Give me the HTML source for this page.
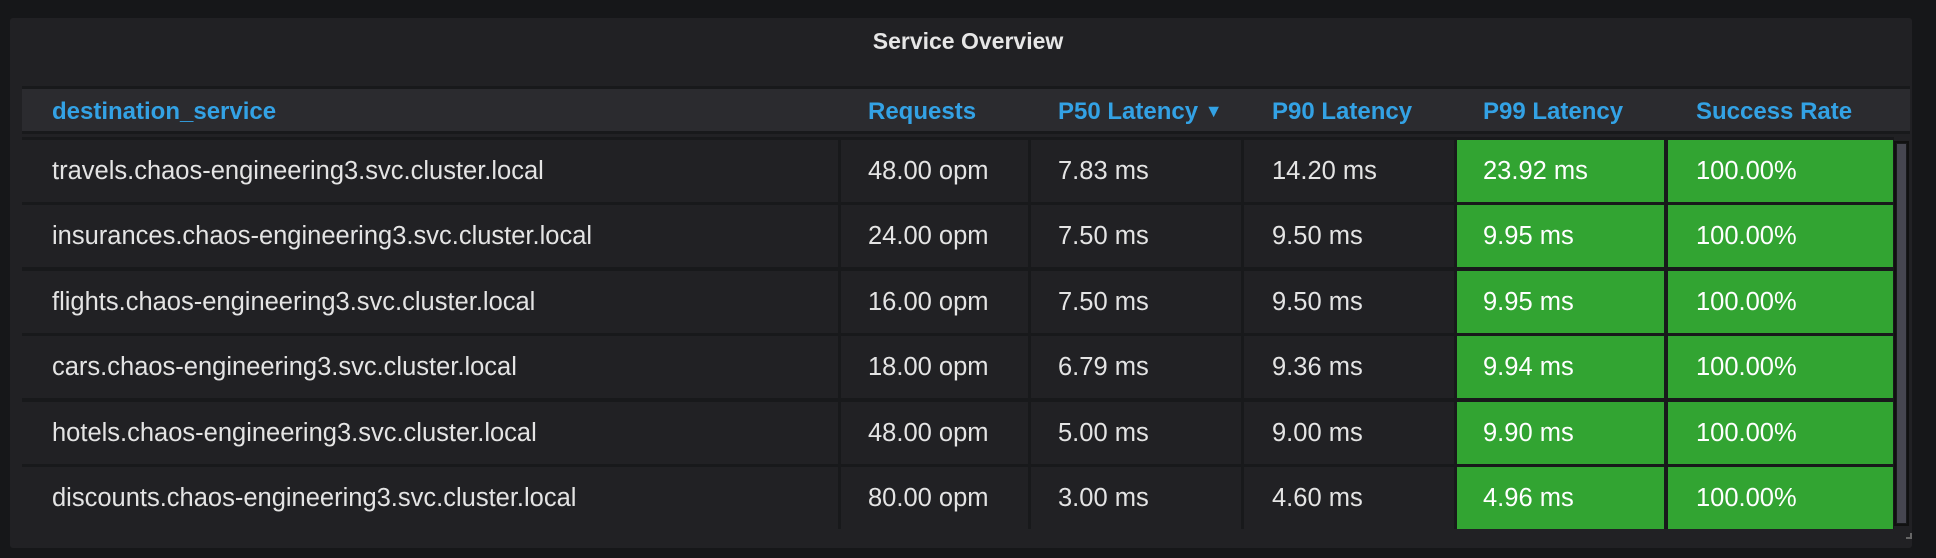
<!DOCTYPE html>
<html><head><meta charset="utf-8"><style>
*{margin:0;padding:0;box-sizing:border-box}
body{width:1936px;height:558px;background:#161719;font-family:"Liberation Sans",sans-serif;position:relative;overflow:hidden;color:#e4e4e4}
.panel{position:absolute;left:10px;top:18px;width:1902px;height:530px;background:#212124;border-radius:3px}
.title{position:absolute;left:0;right:0;top:28px;text-align:center;font-size:23px;font-weight:bold;color:#e6e6e6}
.hdr{position:absolute;left:22px;top:86px;width:1888px;height:48px;background:#2b2b2f;border-top:3px solid #18191b;border-bottom:3px solid #18191b}
.h{position:absolute;top:9px;font-size:24px;font-weight:bold;color:#33a2e5}
.bg{position:absolute;left:22px;top:137px;width:1872px;height:392px;background:#18191b}
.c{position:absolute;height:62px;background:#212124;font-size:25.5px;line-height:62px;white-space:nowrap}
.g{background:#32a432;color:#fff}
.sb{position:absolute;left:1894px;top:141px;width:15px;height:385px;background:#18191b;border:2px solid #111}
.sb div{position:absolute;left:1px;right:1px;top:1px;bottom:1px;background:#464650}
.rz{position:absolute;left:1906px;top:533px;width:6px;height:6px;border-right:2px solid #666;border-bottom:2px solid #666}
</style></head><body>
<div class="panel"></div>
<div class="title">Service Overview</div>
<div class="hdr">
<span class="h" style="left:30px">destination_service</span>
<span class="h" style="left:846px">Requests</span>
<span class="h" style="left:1036px">P50 Latency <span style="font-size:18px;vertical-align:2px">&#9660;</span></span>
<span class="h" style="left:1250px">P90 Latency</span>
<span class="h" style="left:1461px">P99 Latency</span>
<span class="h" style="left:1674px">Success Rate</span>
</div>
<div class="bg"></div>
<div id="rows"></div>
<div class="sb"><div></div></div>
<div class="rz"></div>
<script>
var d=[["travels","48.00 opm","7.83 ms","14.20 ms","23.92 ms"],["insurances","24.00 opm","7.50 ms","9.50 ms","9.95 ms"],["flights","16.00 opm","7.50 ms","9.50 ms","9.95 ms"],["cars","18.00 opm","6.79 ms","9.36 ms","9.94 ms"],["hotels","48.00 opm","5.00 ms","9.00 ms","9.90 ms"],["discounts","80.00 opm","3.00 ms","4.60 ms","4.96 ms"]];
var cols=[[22,838,30],[841,1028,27],[1031,1241,27],[1244,1454,28],[1457,1664,26],[1668,1893,28]];
var h="";
d.forEach(function(r,i){var y=140+i*65.4;
var v=[r[0]+".chaos-engineering3.svc.cluster.local",r[1],r[2],r[3],r[4],"100.00%"];
cols.forEach(function(c,j){h+='<div class="c'+(j>=4?' g':'')+'" style="left:'+c[0]+'px;top:'+y+'px;width:'+(c[1]-c[0])+'px;padding-left:'+c[2]+'px">'+v[j]+'</div>';});});
document.getElementById("rows").innerHTML=h;
</script>
</body></html>
